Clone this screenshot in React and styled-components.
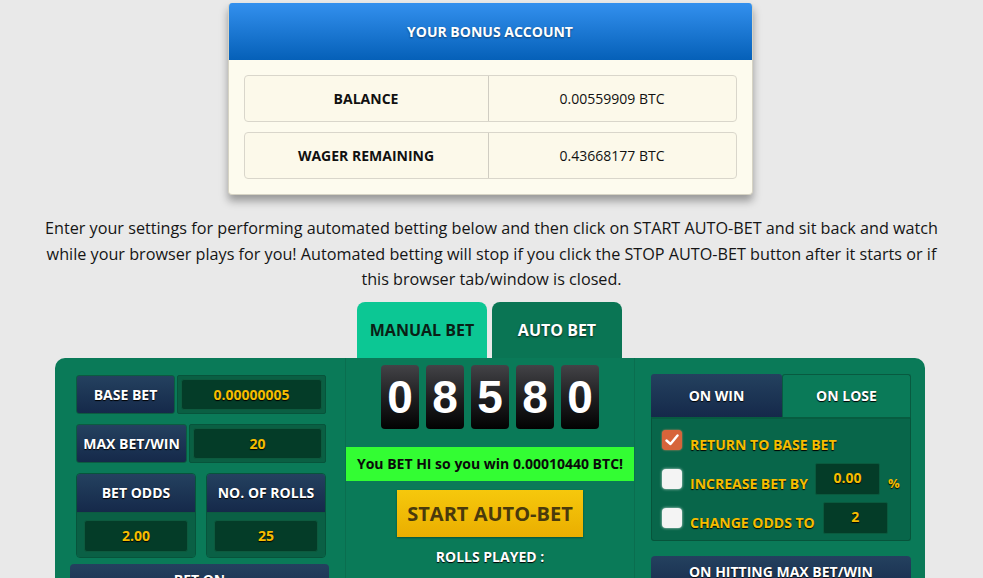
import React from 'react';
import styled, { createGlobalStyle, css } from 'styled-components';

const GlobalStyle = createGlobalStyle`
  html, body {
    margin: 0;
    padding: 0;
    overflow: hidden;
    background: #e9e9e9;
    font-family: "Open Sans", "DejaVu Sans", sans-serif;
  }
`;

const digits = ['0', '8', '5', '8', '0'];

const App = () => {
  return (
    <>
      <GlobalStyle />
      <Page>
        <BonusCard>
          <BonusHeader>YOUR BONUS ACCOUNT</BonusHeader>
          <BonusBody>
            <BonusRow>
              <BonusLabel>BALANCE</BonusLabel>
              <BonusValue>0.00559909 BTC</BonusValue>
            </BonusRow>
            <BonusRow>
              <BonusLabel>WAGER REMAINING</BonusLabel>
              <BonusValue>0.43668177 BTC</BonusValue>
            </BonusRow>
          </BonusBody>
        </BonusCard>

        <Intro>
          Enter your settings for performing automated betting below and then click on START AUTO-BET and sit back and watch
          while your browser plays for you! Automated betting will stop if you click the STOP AUTO-BET button after it starts or if
          this browser tab/window is closed.
        </Intro>

        <Tabs>
          <Tab $active>MANUAL BET</Tab>
          <Tab>AUTO BET</Tab>
        </Tabs>

        <Board>
          <LeftColumn>
            <FieldRow>
              <FieldLabel $width={99}>BASE BET</FieldLabel>
              <InputWrap>
                <InputBox>0.00000005</InputBox>
              </InputWrap>
            </FieldRow>
            <FieldRow>
              <FieldLabel $width={111}>MAX BET/WIN</FieldLabel>
              <InputWrap>
                <InputBox>20</InputBox>
              </InputWrap>
            </FieldRow>
            <PairRow>
              <StackBox>
                <StackHead>BET ODDS</StackHead>
                <StackFoot>
                  <InputBox>2.00</InputBox>
                </StackFoot>
              </StackBox>
              <StackBox>
                <StackHead>NO. OF ROLLS</StackHead>
                <StackFoot>
                  <InputBox>25</InputBox>
                </StackFoot>
              </StackBox>
            </PairRow>
            <WideBar $left>BET ON</WideBar>
          </LeftColumn>

          <MiddleColumn>
            <Digits>
              {digits.map((d, i) => (
                <Digit key={i}>{d}</Digit>
              ))}
            </Digits>
            <WinBar>You BET HI so you win 0.00010440 BTC!</WinBar>
            <StartButton>START AUTO-BET</StartButton>
            <RollsPlayed>ROLLS PLAYED :</RollsPlayed>
          </MiddleColumn>

          <RightColumn>
            <SubTabs>
              <SubTab $active>ON WIN</SubTab>
              <SubTab>ON LOSE</SubTab>
            </SubTabs>
            <OptionPanel>
              <OptionRow>
                <Check $checked>
                  <svg width="14" height="12" viewBox="0 0 14 12">
                    <path d="M1.5 6.5 L5.5 10 L12.5 1.5" fill="none" stroke="#fff" strokeWidth="2.4" strokeLinecap="round" strokeLinejoin="round" />
                  </svg>
                </Check>
                <OptionText>RETURN TO BASE BET</OptionText>
              </OptionRow>
              <OptionRow>
                <Check />
                <OptionText>INCREASE BET BY</OptionText>
                <SmallInput $ml={7}>0.00</SmallInput>
                <Percent>%</Percent>
              </OptionRow>
              <OptionRow>
                <Check />
                <OptionText>CHANGE ODDS TO</OptionText>
                <SmallInput $ml={8}>2</SmallInput>
              </OptionRow>
            </OptionPanel>
            <WideBar>ON HITTING MAX BET/WIN</WideBar>
          </RightColumn>
        </Board>
      </Page>
    </>
  );
};

export default App;

// Styled Components
const Page = styled.div`
  display: flex;
  flex-direction: column;
  align-items: center;
  padding-top: 3px;
`;

const BonusCard = styled.div`
  width: 525px;
  margin-left: -3px;
  border-radius: 4px;
  overflow: hidden;
  background: #fdfbee;
  border: 1px solid #d6d3c4;
  border-top: none;
  box-sizing: border-box;
  box-shadow: 0 6px 8px rgba(0, 0, 0, 0.35);
`;

const BonusHeader = styled.div`
  height: 57px;
  display: flex;
  align-items: center;
  justify-content: center;
  background: linear-gradient(#3390ee, #0560b8);
  color: #fff;
  font-size: 14px;
  font-weight: 700;
  text-shadow: 0 1px 2px rgba(0, 0, 0, 0.45);
`;

const BonusBody = styled.div`
  display: flex;
  flex-direction: column;
  gap: 10px;
  padding: 15px 15px 15px 15px;
`;

const BonusRow = styled.div`
  display: grid;
  grid-template-columns: 244px 1fr;
  height: 47px;
  box-sizing: border-box;
  border: 1px solid #d9d6cb;
  border-radius: 4px;
  background: #fcf9ea;
  font-size: 14px;
  color: #111;
`;

const BonusLabel = styled.div`
  display: flex;
  align-items: center;
  justify-content: center;
  font-weight: 700;
  border-right: 1px solid #d0cdc2;
`;

const BonusValue = styled.div`
  display: flex;
  align-items: center;
  justify-content: center;
`;

const Intro = styled.p`
  width: 910px;
  margin: 21px 0 0;
  text-align: center;
  font-size: 16.2px;
  line-height: 25.5px;
  color: #151515;
`;

const Tabs = styled.div`
  display: flex;
  gap: 5px;
  margin-top: 9px;
  margin-left: -4px;
`;

const Tab = styled.div`
  width: 130px;
  height: 56px;
  display: flex;
  align-items: center;
  justify-content: center;
  border-radius: 8px 8px 0 0;
  font-size: 16px;
  font-weight: 700;
  ${({ $active }) =>
    $active
      ? css`
          background: #0cc794;
          color: #0a1f16;
        `
      : css`
          background: #0a7554;
          color: #fff;
          text-shadow: 0 1px 2px rgba(0, 0, 0, 0.7);
        `}
`;

const Board = styled.div`
  width: 870px;
  height: 260px;
  display: grid;
  grid-template-columns: 290px 290px 290px;
  background: #0a7a58;
  border-radius: 10px 10px 0 0;
  margin-left: -3px;
`;

const LeftColumn = styled.div`
  display: flex;
  flex-direction: column;
  padding: 17px 19px 0 21px;
`;

const FieldRow = styled.div`
  display: flex;
  gap: 2px;
  height: 39px;
  margin-bottom: 10px;
`;

const navyBox = css`
  background: linear-gradient(#24415f, #15294a);
  border: 1px solid #0c5b40;
  color: #fff;
  font-size: 14px;
  font-weight: 700;
  text-shadow: 0 1px 1px #000;
`;

const FieldLabel = styled.div`
  ${navyBox};
  width: ${({ $width }) => $width}px;
  box-sizing: border-box;
  display: flex;
  align-items: center;
  justify-content: center;
  border-radius: 3px;
`;

const InputWrap = styled.div`
  flex: 1;
  display: flex;
  padding: 3px;
  background: #0a5f43;
  border: 1px solid #07543b;
  border-radius: 2px;
`;

const InputBox = styled.div`
  flex: 1;
  display: flex;
  align-items: center;
  justify-content: center;
  background: #043c28;
  border: 1px solid #0d5a3e;
  border-radius: 3px;
  color: #f5bd00;
  font-size: 14px;
  font-weight: 700;
  text-shadow: 0 1px 1px #000;
`;

const PairRow = styled.div`
  display: flex;
  gap: 10px;
`;

const StackBox = styled.div`
  width: 120px;
  height: 85px;
  display: flex;
  flex-direction: column;
  border: 1px solid #07543b;
  border-radius: 4px;
  overflow: hidden;
  box-sizing: border-box;
`;

const StackHead = styled.div`
  ${navyBox};
  border: none;
  border-bottom: 1px solid #0c5b40;
  height: 38px;
  display: flex;
  align-items: center;
  justify-content: center;
`;

const StackFoot = styled.div`
  flex: 1;
  display: flex;
  padding: 7px 7px 5px;
  background: #0a6045;
`;

const WideBar = styled.div`
  ${navyBox};
  border: none;
  height: 40px;
  margin-top: ${({ $left }) => ($left ? '6px' : '15px')};
  margin-left: ${({ $left }) => ($left ? '-6px' : '0')};
  margin-right: ${({ $left }) => ($left ? '-3px' : '0')};
  border-radius: 4px 4px 0 0;
  display: flex;
  justify-content: center;
  padding-top: 6px;
  box-sizing: border-box;
`;

const MiddleColumn = styled.div`
  display: flex;
  flex-direction: column;
  align-items: center;
  padding-top: 7px;
  border-left: 1px solid #0a6e4f;
  border-right: 1px solid #0a6e4f;
`;

const Digits = styled.div`
  display: flex;
  gap: 7px;
`;

const Digit = styled.div`
  width: 38px;
  height: 64px;
  border-radius: 4px;
  background: linear-gradient(#434347, #1c1c1e 55%, #020202);
  color: #fff;
  font-family: "Liberation Sans", Arial, sans-serif;
  font-size: 46px;
  font-weight: 700;
  display: flex;
  align-items: center;
  justify-content: center;
`;

const WinBar = styled.div`
  align-self: stretch;
  margin-top: 18px;
  height: 34px;
  background: #33fd33;
  display: flex;
  align-items: center;
  justify-content: center;
  color: #0a0a0a;
  font-size: 14px;
  font-weight: 700;
`;

const StartButton = styled.div`
  margin-top: 9px;
  width: 186px;
  height: 47px;
  background: linear-gradient(#f6c80c, #eaae00);
  box-shadow: 0 1px 2px rgba(0, 0, 0, 0.35);
  display: flex;
  align-items: center;
  justify-content: center;
  color: #4a3a0c;
  font-size: 20px;
  font-weight: 700;
`;

const RollsPlayed = styled.div`
  margin-top: 10px;
  color: #fff;
  font-size: 14px;
  font-weight: 700;
  text-shadow: 0 1px 1px #000;
`;

const RightColumn = styled.div`
  display: flex;
  flex-direction: column;
  padding: 16px 14px 0 16px;
`;

const SubTabs = styled.div`
  display: flex;
  height: 43px;
`;

const SubTab = styled.div`
  flex: ${({ $active }) => ($active ? '0 0 131px' : '1')};
  display: flex;
  align-items: center;
  justify-content: center;
  box-sizing: border-box;
  border-radius: 3px 3px 0 0;
  font-size: 14px;
  font-weight: 700;
  color: #fff;
  text-shadow: 0 1px 1px #000;
  ${({ $active }) =>
    $active
      ? css`
          background: linear-gradient(#24415f, #15294a);
        `
      : css`
          background: #0a7a58;
          border: 1px solid #085a40;
          border-bottom: none;
        `}
`;

const OptionPanel = styled.div`
  height: 124px;
  box-sizing: border-box;
  display: flex;
  flex-direction: column;
  padding: 6px 0 0 10px;
  gap: 8px;
  background: #08664a;
  border: 1px solid #07543b;
  border-top: 2px solid #075c40;
  border-radius: 0 0 3px 3px;
`;

const OptionRow = styled.div`
  display: flex;
  align-items: center;
  height: 31px;
`;

const Check = styled.div`
  width: 20px;
  height: 20px;
  border-radius: 4px;
  box-sizing: border-box;
  display: flex;
  align-items: center;
  justify-content: center;
  background: ${({ $checked }) => ($checked ? '#d7643a' : '#f4f4f4')};
  box-shadow: ${({ $checked }) => ($checked ? '0 0 2px #f08a60' : '0 0 3px rgba(255,255,255,0.8)')};
`;

const OptionText = styled.span`
  margin-left: 8px;
  padding-top: 8px;
  color: #f5bd00;
  font-size: 14px;
  font-weight: 700;
  text-shadow: 0 1px 1px #000;
`;

const SmallInput = styled.div`
  margin-left: ${({ $ml }) => $ml}px;
  width: 65px;
  height: 32px;
  box-sizing: border-box;
  display: flex;
  align-items: center;
  justify-content: center;
  padding-bottom: 3px;
  background: #043c28;
  border: 1px solid #0a5a3e;
  border-radius: 2px;
  color: #f5bd00;
  font-size: 14px;
  font-weight: 700;
  text-shadow: 0 1px 1px #000;
`;

const Percent = styled.span`
  margin-left: 8px;
  padding-top: 8px;
  color: #f5bd00;
  font-size: 13px;
  font-weight: 700;
  text-shadow: 0 1px 1px #000;
`;
